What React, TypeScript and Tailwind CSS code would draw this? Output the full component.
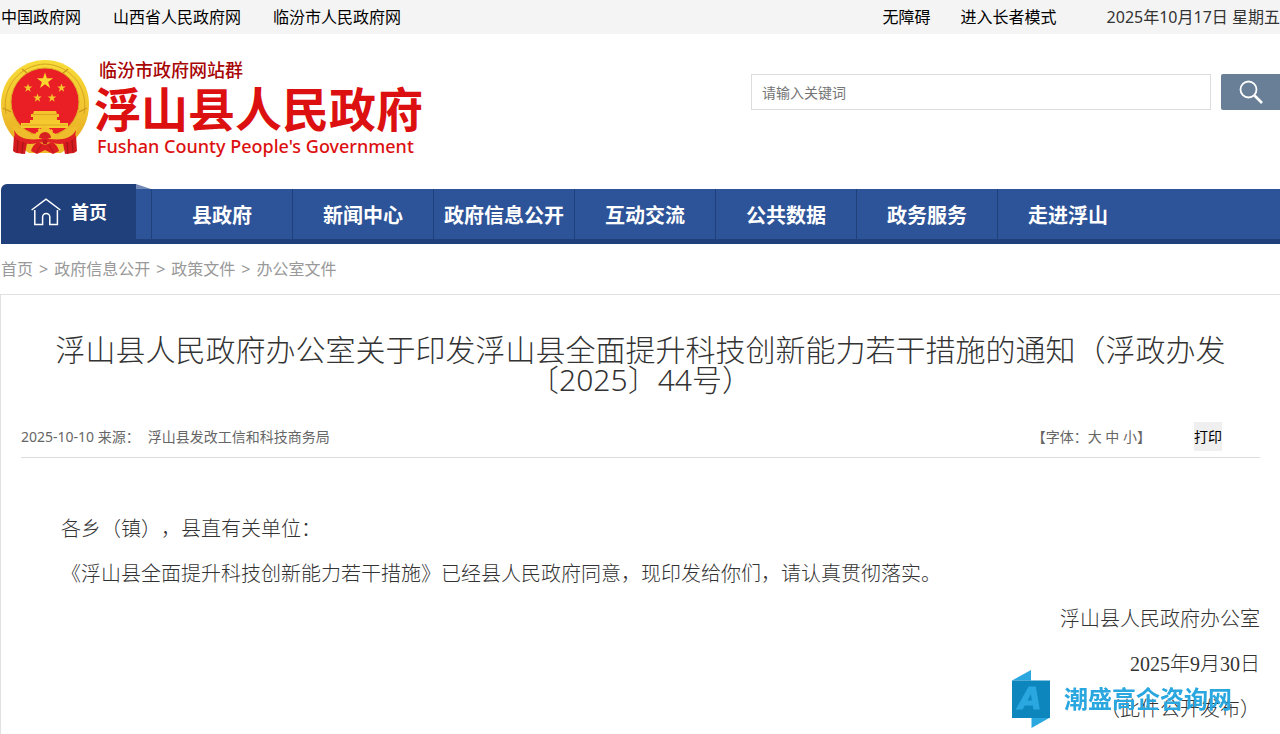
import React from 'react';

const topLinks = ['中国政府网', '山西省人民政府网', '临汾市人民政府网'];

const navItems = ['县政府', '新闻中心', '政府信息公开', '互动交流', '公共数据', '政务服务', '走进浮山'];

const crumbs = ['首页', '政府信息公开', '政策文件', '办公室文件'];

const smallStars = [
  { x: 28, y: 30 },
  { x: 37.5, y: 40 },
  { x: 52, y: 40 },
  { x: 61.5, y: 30 }
];

const STAR = 'M0-10 2.3-3.1 9.5-3.1 3.7 1.2 5.9 8.1 0 3.9-5.9 8.1-3.7 1.2-9.5-3.1-2.3-3.1Z';

const Emblem: React.FC = () => (
  <svg viewBox="0 0 90 100" className="h-[100px] w-[90px] shrink-0" aria-hidden="true">
    <defs>
      <linearGradient id="gold" x1="0" y1="0" x2="0" y2="1">
        <stop offset="0" stopColor="#f7dc38" />
        <stop offset="0.6" stopColor="#f1c52f" />
        <stop offset="1" stopColor="#e8ae22" />
      </linearGradient>
    </defs>
    {/* Wheat wreath */}
    <path d="M45 2C69 2 89 21 89 46c0 15-6 27-14 35H15C7 73 1 61 1 46 1 21 21 2 45 2Z" fill="url(#gold)" />
    <path d="M6 56C1 28 21 7 45 6c24 1 44 22 39 50" fill="none" stroke="#d6a422" strokeWidth="1" />
    <path d="M3 50l8 4M87 50l-8 4M22 11l5 4M68 11l-5 4" stroke="#c8931a" strokeWidth="1.2" />
    <circle cx="45" cy="44" r="34" fill="#ea1f25" stroke="#dda527" strokeWidth="1" />
    {/* Stars */}
    <path d={STAR} transform="translate(45 23) scale(0.85)" fill="#f9d72f" />
    {smallStars.map((s) => (
      <path key={s.x} d={STAR} transform={`translate(${s.x} ${s.y}) scale(0.45)`} fill="#f4c52c" />
    ))}
    {/* Gate */}
    <path d="M34 53h22l1 3h2v3h-2v4H33v-4h-2v-3h2Z" fill="#f4c42c" />
    <path d="M33 56.500h24" stroke="#d99c1e" strokeWidth="0.8" />
    <path d="M30 62h30v3h8v5H21v-5h9Z" fill="#f6c92e" />
    <path d="M22 67h45" stroke="#dba021" strokeWidth="0.8" />
    {/* Lower wreath and gear */}
    <path d="M12 68c8 2 14 4 20 9l13-6 13 6c6-5 12-7 20-9l-5 19-12 8H29l-12-8Z" fill="#efbd2b" />
    <circle cx="45" cy="78" r="8.5" fill="#f3c02b" stroke="#f3c02b" strokeWidth="2" strokeDasharray="2.6 2" />
    <path d="M39 80a6 6 0 0 1 12 0Z" fill="#d82020" />
    {/* Drapes */}
    <path d="M14 72c5 10 17 10 26 9l5-2 5 2c9 1 21 1 26-9l-1 8c-6 6-14 7-22 5l-8-1-8 1c-8 2-16 1-22-5Z" fill="#e02224" />
    <path d="M14 77c2 5 7 7 13 8l-2 11-9-1-3-2ZM76 77c-2 5-7 7-13 8l2 11 9-1 3-2Z" fill="#d51a1e" />
    <path d="M18 82l-1 12M23 84l-1 12M72 82l1 12M67 84l1 12" stroke="#a5161a" strokeWidth="1.2" />
    <path d="M38 84c-4 2-6 5-7 9l6 3 8-4 8 4 6-3c-1-4-3-7-7-9l-7 3Z" fill="#dc1e20" />
    <path d="M41 87l-5 8M49 87l5 8" stroke="#a5161a" strokeWidth="0.8" />
    <circle cx="45" cy="84" r="2.5" fill="#c4171b" />
  </svg>
);

const TopBar: React.FC = () => (
  <div className="flex h-[34px] items-center justify-between bg-[#f4f4f4] pl-px text-black">
    <div className="flex gap-8">
      {topLinks.map((t) => (
        <a key={t} href="#">{t}</a>
      ))}
    </div>
    <div className="flex">
      <a href="#" className="mr-[30px]">无障碍</a>
      <a href="#" className="mr-[50px]">进入长者模式</a>
      <span className="text-[#333]">2025年10月17日 星期五</span>
    </div>
  </div>
);

const Header: React.FC = () => (
  <header className="flex h-[150px] items-start justify-between pt-6">
    <a href="#" className="flex">
      <Emblem />
      <span className="ml-1 flex flex-col whitespace-nowrap text-[#dc1010]">
        <span className="ml-[5px] text-[18px] leading-6 font-medium text-[#a80505]">临汾市政府网站群</span>
        <span className="text-[47px] leading-[54px] font-bold">浮山县人民政府</span>
        <span className="ml-[3px] text-[18px] leading-5 font-medium">Fushan County People's Government</span>
      </span>
    </a>
    <form className="mt-4 flex gap-2.5" onSubmit={(e) => e.preventDefault()}>
      <input
        type="text"
        aria-label="请输入关键词"
        placeholder="请输入关键词"
        className="h-9 w-[460px] border border-[#ddd] px-2.5 text-sm placeholder:text-[#757575]"
      />
      <button type="submit" aria-label="搜索" className="flex h-9 w-[59px] items-center justify-center rounded-l-xs bg-[#687f97]">
        <svg viewBox="0 0 24 24" className="h-6 w-6" fill="none" stroke="#fff">
          <circle cx="9.5" cy="9.5" r="8" strokeWidth="1.8" />
          <path d="M15.5 15.5 23 23" strokeWidth="2.6" />
        </svg>
      </button>
    </form>
  </header>
);

const Nav: React.FC = () => (
  <nav className="flex items-end pl-px font-bold text-white">
    <a href="#" className="flex h-[60px] w-[135px] items-center gap-2.5 rounded-tl-md bg-[#20407b] pb-1 pl-[30px] text-[18px]">
      <svg viewBox="0 0 30 28" className="h-7 w-[30px]" fill="none" stroke="#fff" strokeWidth="1.5">
        <path d="M.6 12 15 1.2 29.4 12" />
        <path d="M3.8 12v14.5h7.800V19a3.600 3.600 0 0 1 7.200 0v7.500h7.600V12" />
      </svg>
      首页
    </a>
    <div className="relative flex h-[55px] flex-1 border-b-5 border-[#20407b] bg-[#2d5398] pl-[15px]">
      <svg viewBox="0 0 15 5" className="absolute -top-[5px] left-0 h-[5px] w-[15px]">
        <path d="M0 0 15 5H0Z" fill="#7189b4" />
      </svg>
      {navItems.map((t) => (
        <a key={t} href="#" className="flex w-[141px] items-center justify-center border-l border-[#20407b] pt-1 text-xl whitespace-nowrap">
          {t}
        </a>
      ))}
    </div>
  </nav>
);

const Watermark: React.FC = () => (
  <div className="fixed right-12 bottom-1.5 flex items-center gap-3.5">
    <svg viewBox="0 0 38 58" className="h-[58px] w-[38px]">
      <path d="M0 10.500 19 0v10.500ZM19.500 58V47.500H38Z" fill="#2ba7e0" />
      <path d="M0 10.500h38v37.500H0Z" fill="#0d86bd" />
      <text
        x="18"
        y="39"
        textAnchor="middle"
        fontFamily="DejaVu Sans"
        fontWeight="bold"
        fontStyle="italic"
        fontSize="30"
        fill="#2ba7e0"
        stroke="#2ba7e0"
        strokeWidth="1"
      >
        A
      </text>
    </svg>
    <span className="text-2xl font-bold whitespace-nowrap text-[#2ba7e0]">潮盛高企咨询网</span>
  </div>
);

const Article: React.FC = () => (
  <article className="flex-1 border-t border-l border-[#e1e1e1] px-5 pt-10">
    <h1 className="text-center text-[30px] leading-[30px] font-light text-[#333]">
      浮山县人民政府办公室关于印发浮山县全面提升科技创新能力若干措施的通知（浮政办发〔2025〕44号）
    </h1>
    <div className="mt-[27px] flex items-center justify-between border-b border-[#dcdcdc] pb-1.5 text-sm text-[#666]">
      <p className="flex gap-2">
        <span>2025-10-10 来源：</span>
        <span>浮山县发改工信和科技商务局</span>
      </p>
      <div className="mr-[38px] flex items-center gap-[43px]">
        <p>
          【字体：<a href="#">大</a> <a href="#">中</a> <a href="#">小</a>】
        </p>
        <button type="button" className="h-[29px] bg-[#efefef] text-black">打印</button>
      </div>
    </div>
    <div className="pt-[49px] font-['Liberation_Serif','Noto_Sans_CJK_SC',serif] text-xl leading-[45px] font-light text-[#333]">
      <p className="indent-10">各乡（镇），县直有关单位：</p>
      <p className="indent-10">《浮山县全面提升科技创新能力若干措施》已经县人民政府同意，现印发给你们，请认真贯彻落实。</p>
      <p className="text-right">浮山县人民政府办公室</p>
      <p className="text-right">2025年9月30日</p>
      <p className="text-right">（此件公开发布）</p>
    </div>
  </article>
);

const App: React.FC = () => {
  return (
    <div lang="zh-CN" className="flex min-h-screen flex-col bg-white font-['Noto_Sans','Noto_Sans_CJK_SC',sans-serif] text-base [text-spacing-trim:space-all]">
      <TopBar />
      <Header />
      <Nav />
      <div className="flex h-[50px] items-center gap-1.5 pl-px text-[#999]">
        {crumbs.map((t, i) => (
          <React.Fragment key={t}>
            {i > 0 && <span>&gt;</span>}
            <a href="#">{t}</a>
          </React.Fragment>
        ))}
      </div>
      <Article />
      <Watermark />
    </div>
  );
};

export default App;
